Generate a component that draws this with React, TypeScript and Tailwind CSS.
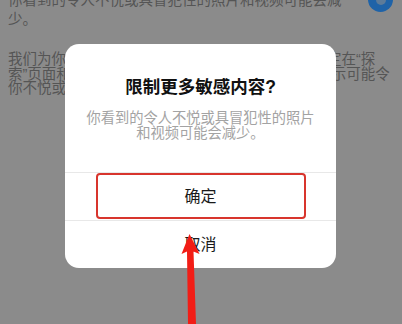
import React from "react";

function RedArrow() {
  return (
    <svg
      className="pointer-events-none absolute inset-0"
      width="402"
      height="324"
      viewBox="0 0 402 324"
      aria-hidden
    >
      <polygon
        points="189.5,234 181.5,254 187,251.5 188,324 196,324 193.5,251.5 199.5,254"
        fill="#f21d16"
      />
    </svg>
  );
}

function ConfirmDialog() {
  return (
    <div className="absolute left-[65px] top-[44px] w-[271px] rounded-[14px] bg-white">
      {/* Header */}
      <div className="px-5 pt-[31px] text-center">
        <div className="text-[17.5px] font-semibold leading-[24px] text-[#111]">
          限制更多敏感内容?
        </div>
        <p className="mt-3 text-[14.25px] leading-[15px] text-[#a3a3a3]">
          你看到的令人不悦或具冒犯性的照片和视频可能会减少。
        </p>
      </div>

      <div className="mt-[31px] border-t border-[#e8e8e8]">
        <button className="flex h-[47px] w-full items-center justify-center text-[16px] text-[#1a1a1a]">
          确定
        </button>
        <div className="border-t border-[#e8e8e8]" />
        <button className="flex h-[47px] w-full items-center justify-center text-[16px] text-[#1a1a1a]">
          取消
        </button>
      </div>

      {/* Annotation box */}
      <div className="pointer-events-none absolute left-[31px] top-[129px] h-[46px] w-[210px] rounded-[4px] border-[2.5px] border-[#d8352d]" />
    </div>
  );
}

export default function App() {
  return (
    <div className="relative h-[324px] w-full overflow-hidden bg-[#8b8b8b] font-['Liberation_Sans','Noto_Sans_CJK_SC',sans-serif]">
      {/* Dimmed settings page */}
      <div className="-mt-[9px] flex items-start justify-between pl-2 pr-[9px]">
        <p className="w-[336px] text-[14.5px] leading-[19px] text-[#555]">
          你看到的令人不悦或具冒犯性的照片和视频可能会减少。
        </p>
        <div className="-mt-[4px] flex h-[25px] w-[25px] items-center justify-center rounded-full bg-[#1f63a8]">
          <div className="h-[10px] w-[10px] rounded-full bg-[#5d7b99]" />
        </div>
      </div>

      <div className="mt-[23px] pl-2 text-[14.5px] leading-[14.5px] text-[#555]">
        <div className="whitespace-nowrap">
          我们为你提供了更多的控制选项，让你可以自行决定在“探
        </div>
        <div className="whitespace-nowrap">
          索”页面和其他位置看到哪些内容。其中部分内容显示可能令
        </div>
        <div className="whitespace-nowrap">你不悦或反感。</div>
      </div>

      <ConfirmDialog />
      <RedArrow />
    </div>
  );
}
